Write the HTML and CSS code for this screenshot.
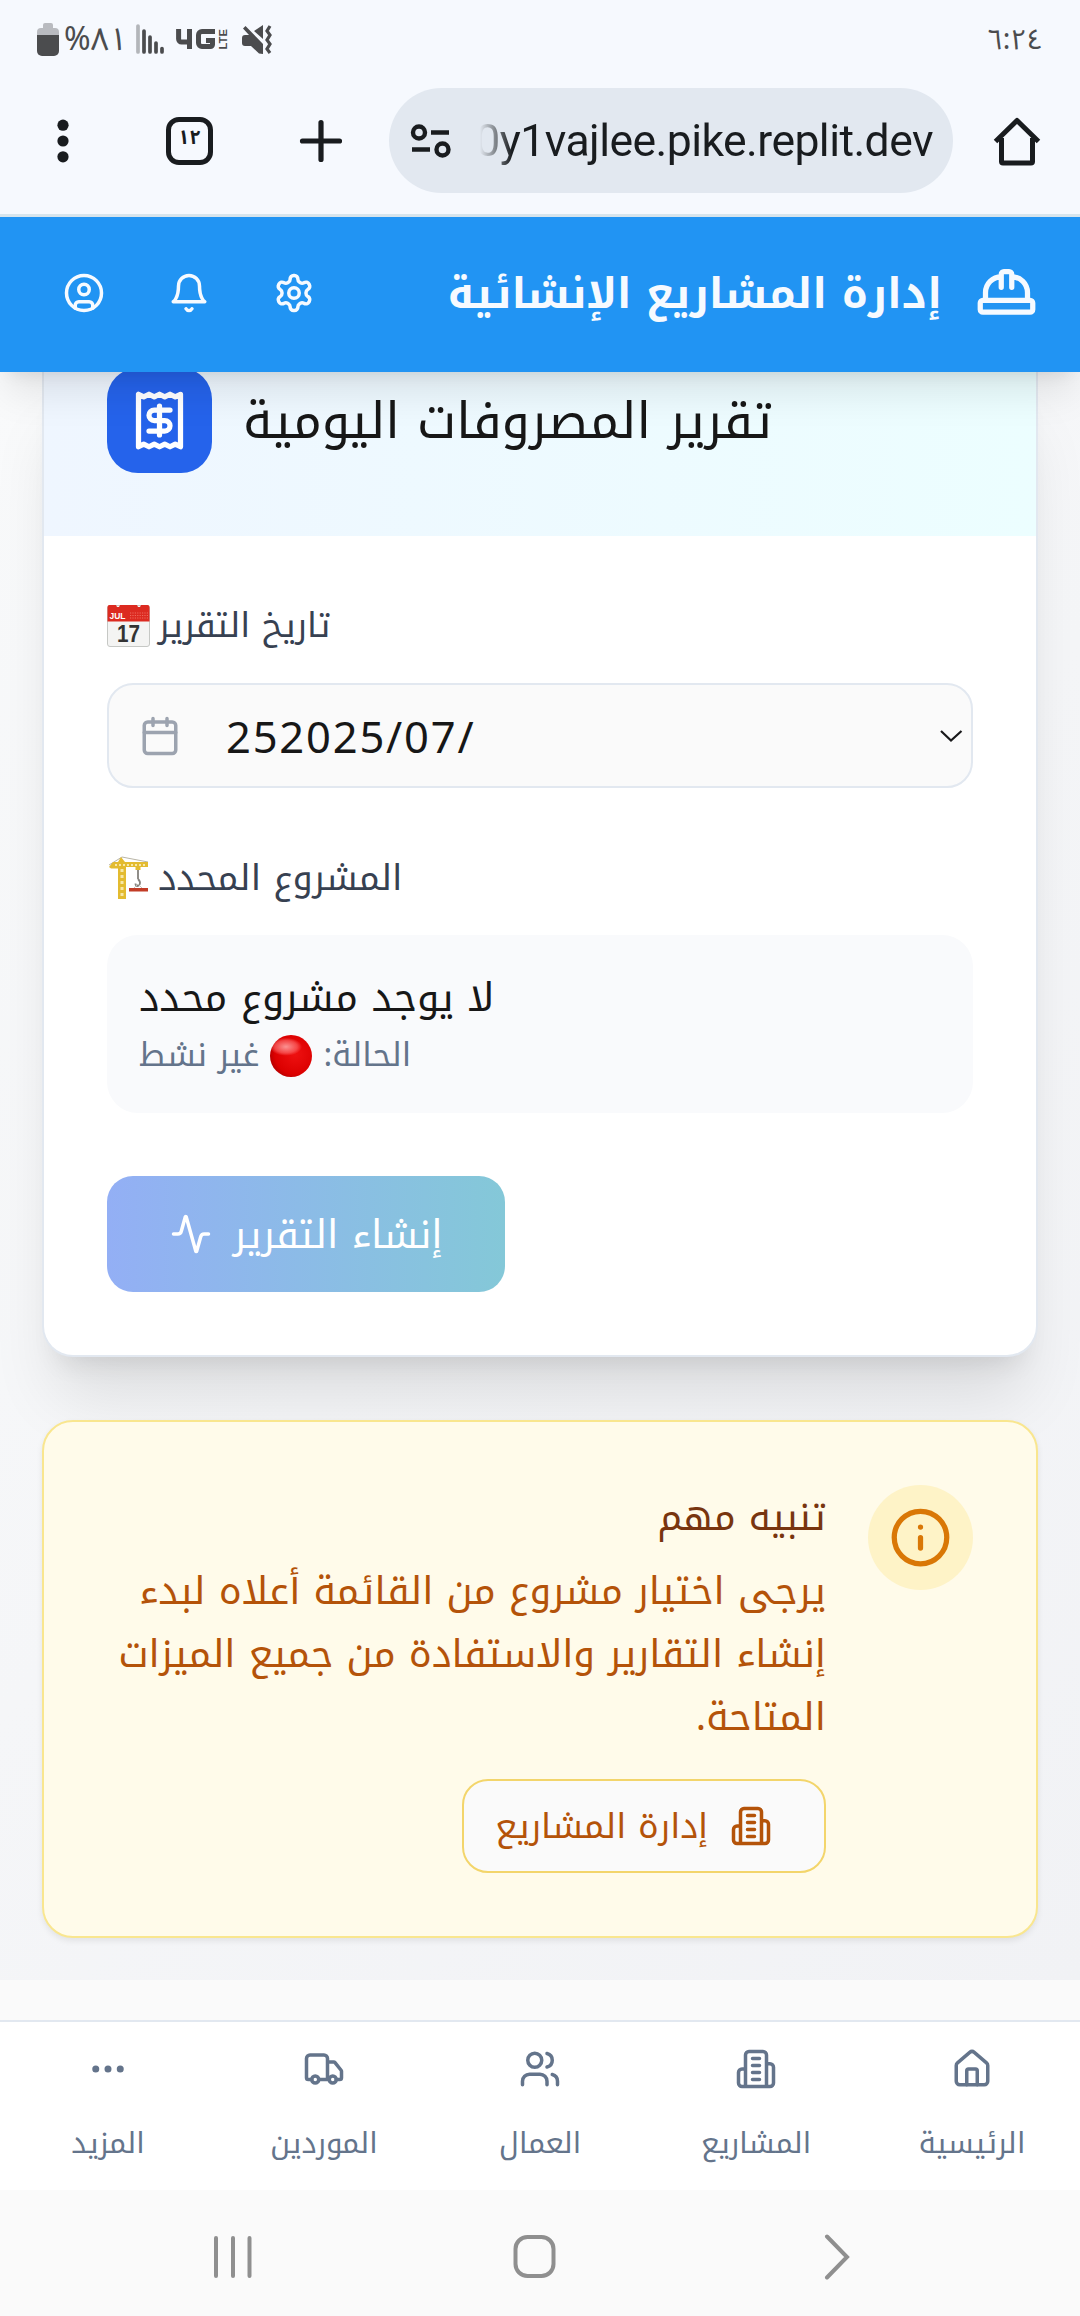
FILE: index.html
```html
<!DOCTYPE html>
<html lang="ar" dir="rtl">
<head>
<meta charset="utf-8">
<title>إدارة المشاريع الإنشائية</title>
<link rel="stylesheet" href="styles.css">
</head>
<body>
<div class="screen">
  <div class="status-bar" dir="ltr">
    <svg class="battery" width="22" height="34" viewBox="0 0 22 34"><path d="M6 5V2a2 2 0 0 1 2-2h6a2 2 0 0 1 2 2v3h2a4 4 0 0 1 4 4v4H0V9a4 4 0 0 1 4-4z" fill="#b9bbc0"/><path d="M0 12h22v16a5 5 0 0 1-5 5H5a5 5 0 0 1-5-5z" fill="#4b4c4e"/></svg>
    <span class="percent">%٨١</span>
    <svg class="signal" width="28" height="31" viewBox="0 0 28 31" stroke="#4b4c4e" stroke-width="3.7" stroke-linecap="round"><path d="M2 2v26" stroke="#b3b6ba"/><path d="M8 7v21M14 13v15M20 19v9M26 24.500v3.500"/></svg>
    <svg class="network" width="52" height="24" viewBox="0 0 52 24" aria-label="4G LTE"><path d="M2.600 0v10a3 3 0 0 0 3 3H16M13.500 0v20" fill="none" stroke="#4b4c4e" stroke-width="5"/><path d="M39 2.500H26A3.500 3.500 0 0 0 22.500 6v8a3.500 3.500 0 0 0 3.500 3.500h8.500a2 2 0 0 0 2-2v-4H30" fill="none" stroke="#4b4c4e" stroke-width="5"/><text class="lte" transform="translate(50.500 20.500) rotate(-90)" textLength="20.500" lengthAdjust="spacingAndGlyphs">LTE</text></svg>
    <svg class="mute" width="31" height="32" viewBox="0 0 31 32"><path d="M0 13a3 3 0 0 1 3-3h4L1 3.500 3.500 1 21 19v10L17 28.500 9 21H3a3 3 0 0 1-3-3zM12 6l9-6v14z" fill="#4b4c4e"/><path d="M28 1l-3 5 3 4-3 5 3 4-3 5 3 4" fill="none" stroke="#4b4c4e" stroke-width="3.200"/></svg>
    <span class="clock">٦:٢٤</span>
  </div>
  <div class="browser-bar" dir="ltr">
    <svg class="menu-dots" width="12" height="44" viewBox="0 0 12 44" fill="#191c1f"><circle cx="6" cy="6.200" r="5.600"/><circle cx="6" cy="22" r="5.600"/><circle cx="6" cy="37.800" r="5.600"/></svg>
    <div class="tabs">١٢</div>
    <svg class="plus" width="44" height="44" viewBox="0 0 44 44"><path d="M22 3.500v37M3.500 22h37" stroke="#191c1f" stroke-width="5.200" stroke-linecap="round"/></svg>
    <div class="address">
      <svg class="tune" width="42" height="36" viewBox="0 0 42 36" fill="none" stroke="#191c1f" stroke-width="4.400"><circle cx="9" cy="9.500" r="6"/><path d="M21 9.500h18M2 26.500h18"/><circle cx="32.500" cy="26.500" r="6"/></svg>
      <div class="url"><span>0y1vajlee.pike.replit.dev</span></div>
    </div>
    <svg class="home" width="50" height="50" viewBox="0 0 50 50"><path d="M3.500 25.500 25 4.500l21.500 21M9.500 22v23.500a1.500 1.500 0 0 0 1.500 1.500h28a1.500 1.500 0 0 0 1.500-1.500V22" fill="none" stroke="#191c1f" stroke-width="5" stroke-linejoin="round"/></svg>
  </div>

  <header class="app-header">
    <svg class="icon helmet" viewBox="0 0 24 24"><path d="M10 10V5a1 1 0 0 1 1-1h2a1 1 0 0 1 1 1v5M14 6a6 6 0 0 1 6 6v3M4 15v-3a6 6 0 0 1 6-6"/><rect x="2" y="15" width="20" height="4.500" rx="1"/></svg>
    <h1>إدارة المشاريع الإنشائية</h1>
    <nav class="tools" dir="ltr">
      <svg class="icon" viewBox="0 0 24 24"><circle cx="12" cy="12" r="10"/><circle cx="12" cy="10" r="3"/><path d="M7 20.662V19a2 2 0 0 1 2-2h6a2 2 0 0 1 2 2v1.662"/></svg>
      <svg class="icon" viewBox="0 0 24 24"><path d="M6 8a6 6 0 0 1 12 0c0 7 3 9 3 9H3s3-2 3-9M10.300 21a1.940 1.940 0 0 0 3.400 0"/></svg>
      <svg class="icon" viewBox="0 0 24 24"><path d="M12.220 2h-.44a2 2 0 0 0-2 2v.18a2 2 0 0 1-1 1.730l-.43.25a2 2 0 0 1-2 0l-.15-.08a2 2 0 0 0-2.730.73l-.22.38a2 2 0 0 0 .73 2.730l.15.1a2 2 0 0 1 1 1.720v.51a2 2 0 0 1-1 1.740l-.15.09a2 2 0 0 0-.73 2.730l.22.38a2 2 0 0 0 2.730.73l.15-.08a2 2 0 0 1 2 0l.43.25a2 2 0 0 1 1 1.730V20a2 2 0 0 0 2 2h.44a2 2 0 0 0 2-2v-.18a2 2 0 0 1 1-1.730l.43-.25a2 2 0 0 1 2 0l.15.08a2 2 0 0 0 2.730-.73l.22-.39a2 2 0 0 0-.73-2.730l-.15-.08a2 2 0 0 1-1-1.740v-.5a2 2 0 0 1 1-1.740l.15-.09a2 2 0 0 0 .73-2.730l-.22-.38a2 2 0 0 0-2.730-.73l-.15.08a2 2 0 0 1-2 0l-.43-.25a2 2 0 0 1-1-1.730V4a2 2 0 0 0-2-2z"/><circle cx="12" cy="12" r="3"/></svg>
    </nav>
  </header>

  <main class="content">
    <section class="card" dir="ltr">
      <div class="card-head">
        <div class="badge"><svg class="icon" viewBox="0 0 24 24"><path d="M4 2v20l2-1 2 1 2-1 2 1 2-1 2 1 2-1 2 1V2l-2 1-2-1-2 1-2-1-2 1-2-1-2 1ZM16 8h-6a2 2 0 1 0 0 4h4a2 2 0 1 1 0 4H8M12 17.500v-11"/></svg></div>
        <h2>تقرير المصروفات اليومية</h2>
      </div>
      <div class="card-body">
        <div class="label">
          <svg width="44" height="44" viewBox="0 0 44 44"><rect x=".5" y="1.500" width="42" height="41" rx="2.500" fill="#f4f4f3" stroke="#c6c8c5"/><path d="M.5 3a2 2 0 0 1 2-2H9l1 2h2l1-2h17l1 2h2l1-2h6.500a2 2 0 0 1 2 2v14.500H.5z" fill="#dc2a20"/><path d="M23 9h18M23 11.500h18M23 14h18" stroke="#ee6a5e" stroke-width="1" stroke-dasharray="1.200 1.200"/><text class="cal-month" x="2.500" y="14.500" textLength="16" lengthAdjust="spacingAndGlyphs">JUL</text><text class="cal-day" x="21.500" y="38" text-anchor="middle" textLength="23" lengthAdjust="spacingAndGlyphs">17</text></svg>
          <span dir="rtl">تاريخ التقرير</span>
        </div>
        <div class="date-input">
          <svg class="icon" viewBox="0 0 24 24"><rect x="3" y="4" width="18" height="18" rx="2"/><path d="M16 2v4M8 2v4M3 10h18"/></svg>
          <span class="date">252025/07/</span>
          <svg class="chevron" width="24" height="14" viewBox="0 0 24 14"><path d="M2 2l10 9.500L22.500 2" fill="none" stroke="#18181a" stroke-width="2.200"/></svg>
        </div>
        <div class="label label-project">
          <svg width="44" height="44" viewBox="0 0 44 44"><path d="M15 1 2 9M15 1l26 5" stroke="#b9b5a6" fill="none"/><path d="M14 1l-3 5H6l-4 5 2 1.500h7V43h8V11h22V6H18z" fill="#e3bb30"/><path d="M8 9h32" stroke="#f7e7a8" stroke-width="2" stroke-dasharray="2 2"/><path d="M15 13v29" stroke="#f7e7a8" stroke-width="3" stroke-dasharray="3 3"/><path d="M28.500 11h5v3h-5z" fill="#e3bb30"/><path d="M31 14v9m0 0c4 4 1 7-.5 7s-2-1-2-2.500" stroke="#84827d" stroke-width="1.800" fill="none"/><path d="M31 28l-5 5h10z" fill="none" stroke="#c4c1bb"/><rect x="22" y="32" width="19" height="3.500" fill="#c23c26"/></svg>
          <span dir="rtl">المشروع المحدد</span>
        </div>
        <div class="project">
          <div class="project-name" dir="rtl">لا يوجد مشروع محدد</div>
          <div class="project-state" dir="rtl"><span>الحالة:</span><i class="dot"></i><span>غير نشط</span></div>
        </div>
        <button class="generate"><svg class="icon" viewBox="0 0 24 24"><path d="M22 12h-2.480a2 2 0 0 0-1.930 1.460l-2.350 8.360a.25.25 0 0 1-.48 0L9.240 2.180a.25.25 0 0 0-.48 0l-2.350 8.360A2 2 0 0 1 4.490 12H2"/></svg><span>إنشاء التقرير</span></button>
      </div>
    </section>

    <section class="notice">
      <div class="notice-icon"><svg class="icon" viewBox="0 0 24 24"><circle cx="12" cy="12" r="10"/><path d="M12 16v-4M12 8h.01"/></svg></div>
      <div class="notice-text">
        <h3>تنبيه مهم</h3>
        <p>يرجى اختيار مشروع من القائمة أعلاه لبدء<br>إنشاء التقارير والاستفادة من جميع الميزات<br>المتاحة.</p>
        <button class="manage"><svg class="icon" viewBox="0 0 24 24"><path d="M6 22V4a2 2 0 0 1 2-2h8a2 2 0 0 1 2 2v18ZM6 12H4a2 2 0 0 0-2 2v6a2 2 0 0 0 2 2h2M18 9h2a2 2 0 0 1 2 2v9a2 2 0 0 1-2 2h-2M10 6h4M10 10h4M10 14h4M10 18h4"/></svg><span>إدارة المشاريع</span></button>
      </div>
    </section>
  </main>

  <nav class="bottom-nav">
    <a><svg class="icon" viewBox="0 0 24 24"><path d="M15 21v-8a1 1 0 0 0-1-1h-4a1 1 0 0 0-1 1v8"/><path d="M3 10a2 2 0 0 1 .709-1.528l7-5.999a2 2 0 0 1 2.582 0l7 5.999A2 2 0 0 1 21 10v9a2 2 0 0 1-2 2H5a2 2 0 0 1-2-2z"/></svg><span>الرئيسية</span></a>
    <a><svg class="icon" viewBox="0 0 24 24"><path d="M6 22V4a2 2 0 0 1 2-2h8a2 2 0 0 1 2 2v18ZM6 12H4a2 2 0 0 0-2 2v6a2 2 0 0 0 2 2h2M18 9h2a2 2 0 0 1 2 2v9a2 2 0 0 1-2 2h-2M10 6h4M10 10h4M10 14h4M10 18h4"/></svg><span>المشاريع</span></a>
    <a><svg class="icon" viewBox="0 0 24 24"><path d="M16 21v-2a4 4 0 0 0-4-4H6a4 4 0 0 0-4 4v2"/><circle cx="9" cy="7" r="4"/><path d="M22 21v-2a4 4 0 0 0-3-3.870M16 3.130a4 4 0 0 1 0 7.750"/></svg><span>العمال</span></a>
    <a><svg class="icon" viewBox="0 0 24 24"><path d="M14 18V6a2 2 0 0 0-2-2H4a2 2 0 0 0-2 2v11a1 1 0 0 0 1 1h2M15 18H9M19 18h2a1 1 0 0 0 1-1v-3.650a1 1 0 0 0-.22-.624l-3.480-4.350A1 1 0 0 0 17.520 8H14"/><circle cx="17" cy="18" r="2"/><circle cx="7" cy="18" r="2"/></svg><span>الموردين</span></a>
    <a><svg class="icon" viewBox="0 0 24 24"><circle cx="12" cy="12" r="1"/><circle cx="19" cy="12" r="1"/><circle cx="5" cy="12" r="1"/></svg><span>المزيد</span></a>
  </nav>
  <div class="system-nav" dir="ltr">
    <svg class="recents" width="40" height="44" viewBox="0 0 40 44"><path d="M3 3v38M20 3v38M36.500 3v38"/></svg>
    <svg class="home-key" width="44" height="44" viewBox="0 0 44 44"><rect x="2.500" y="2" width="38" height="39" rx="12"/></svg>
    <svg class="back" width="26" height="46" viewBox="0 0 26 46"><path d="M3 2.500 23 23 3 43.500"/></svg>
  </div>
</div>
</body>
</html>
```
FILE: styles.css
```css
* { box-sizing: border-box; }
body { margin: 0; background: #fafafa; font-family: "Noto Kufi Arabic", "DejaVu Sans", "Noto Sans", sans-serif; }
h1, h2, h3, p { margin: 0; }
svg { display: block; flex: none; }
button { font: inherit; border: 0; padding: 0; }
span { white-space: nowrap; }
.screen { width: 1080px; height: 2316px; overflow: hidden; display: flex; flex-direction: column; }
.icon { width: 42px; height: 42px; fill: none; stroke: currentColor; stroke-width: 2; stroke-linecap: round; stroke-linejoin: round; }

.status-bar { height: 80px; flex: none; background: #f6f9fe; display: flex; align-items: flex-start; padding: 23px 37px 0; color: #4b4c4e; font-family: "Noto Sans Arabic", "Noto Sans", sans-serif; line-height: 34px; }
.percent { margin-left: 5px; width: 57px; font-size: 32px; }
.signal { margin: 1px 0 0 15px; }
.network { margin: 6px 0 0 12px; }
.lte { font: 700 11px "Liberation Sans", sans-serif; fill: #4b4c4e; }
.mute { margin: 2px 0 0 14px; }
.clock { margin-left: auto; font-size: 28.5px; }

.browser-bar { height: 137px; flex: none; background: #f6f9fe; border-bottom: 3px solid #d7e5ed; display: flex; align-items: center; padding: 0 38px 13px 57px; }
.tabs { width: 47px; height: 48px; margin-left: 97px; border: 5px solid #191c1f; border-radius: 13px; font: 700 20px/33px "Noto Sans Arabic", "DejaVu Sans", sans-serif; text-align: center; color: #191c1f; }
.plus { margin-left: 86px; }
.address { width: 565px; height: 105px; margin-left: 46px; border-radius: 53px; background: #e2e8f0; display: flex; align-items: center; padding-left: 21px; }
.url { width: 461px; margin-left: 20px; overflow: hidden; display: flex; justify-content: flex-end; font: 44.5px/60px Roboto, sans-serif; letter-spacing: -.55px; color: #191c1f; -webkit-mask-image: linear-gradient(90deg, transparent 8px, #000 40px); mask-image: linear-gradient(90deg, transparent 8px, #000 40px); }
.home { margin-left: 39px; }

.app-header { position: relative; z-index: 2; height: 155px; flex: none; background: #2194f3; color: #f6faff; display: flex; align-items: center; padding: 0 42px 4px 63px; box-shadow: 0 26px 39px -8px rgba(0,0,0,.1), 0 10px 16px -10px rgba(0,0,0,.1); }
.helmet { width: 63px; height: 63px; }
.app-header h1 { margin: 3px 33px 0 0; font-size: 42.500px; line-height: 70px; font-weight: 700; white-space: nowrap; }
.tools { margin-right: auto; display: flex; gap: 63px; }

.content { height: 1608px; flex: none; overflow: hidden; background: linear-gradient(135deg, #f9fafb, #f1f2f5); padding: 0 42px; }
.card { border: 2px solid #e2e8f0; border-top: 0; border-radius: 0 0 31px 31px; background: #fff; box-shadow: 0 52px 65px -13px rgba(0,0,0,.1), 0 21px 26px -16px rgba(0,0,0,.1); }
.card-head { height: 163.500px; display: flex; align-items: flex-start; padding: 0 63px; background: linear-gradient(90deg, #eff6ff, #ecfeff); }
.badge { width: 105px; height: 105px; margin-top: -4.500px; border-radius: 31px; background: #2563eb; color: #fff; display: grid; place-items: center; }
.badge .icon { width: 63px; height: 63px; }
.card-head h2 { margin: -3px 0 0 31px; font-size: 50.400px; line-height: 105px; font-weight: 400; color: #171717; white-space: nowrap; }
.card-body { padding: 69px 63px 63px; }
.label { display: flex; align-items: center; height: 42px; margin-bottom: 36.500px; font-size: 34.300px; line-height: 42px; color: #374151; }
.label span { margin-left: 7px; }
.label-project { margin-bottom: 36px; font-size: 36px; }
.cal-month { font: 700 9.500px "Liberation Sans", sans-serif; fill: #fff; }
.cal-day { font: 700 23px "Liberation Sans", sans-serif; fill: #333; }
.date-input { height: 105px; border: 2px solid #e2e8f0; border-radius: 26px; background: #fafafa; display: flex; align-items: center; padding: 0 8px 0 30px; color: #171717; margin-bottom: 69px; }
.date-input .icon { color: #9ca3af; }
.date { margin-left: 45px; font: 43.500px/60px "Noto Sans", sans-serif; letter-spacing: 1.800px; }
.chevron { margin-left: auto; }
.project { height: 177.500px; border-radius: 31px; background: #f9fafc; padding: 31px 32px; display: flex; flex-direction: column; align-items: flex-start; }
.project-name { font-size: 39.700px; line-height: 63px; color: #171717; white-space: nowrap; }
.project-state { display: flex; align-items: center; font-size: 32.800px; line-height: 53px; color: #64748b; }
.dot { width: 42px; height: 42px; margin: 0 11px; border-radius: 50%; background: radial-gradient(ellipse 16px 9px at 38% 28%, rgba(255,170,170,.85), rgba(255,110,110,.6) 70%, transparent), radial-gradient(circle at 60% 45%, #ee1111, #dc0000 60%, #b80000 75%, #ef5050); }
.generate { width: 398px; height: 115.500px; margin-top: 63.500px; border-radius: 26px; background: linear-gradient(90deg, #93aff5, #84c8d8); color: #fff; display: flex; align-items: center; padding-left: 63px; font-size: 39.200px; line-height: 60px; }
.generate span { margin: 2px 0 0 21px; }

.notice { height: 517.500px; margin-top: 63.500px; border: 2px solid #f9e68f; border-radius: 31px; background: #fffbea; box-shadow: 0 3px 6px rgba(0,0,0,.08); padding: 62.500px 63px; display: flex; gap: 42px; }
.notice-icon { width: 105px; height: 105px; flex: none; border-radius: 50%; background: #fef3c7; color: #d97706; display: grid; place-items: center; }
.notice-icon .icon { width: 63px; height: 63px; }
.notice-text { white-space: nowrap; }
.notice h3 { padding-top: 1px; font-size: 37.800px; line-height: 63px; font-weight: 400; color: #78350f; }
.notice p { margin-top: 11px; font-size: 38.700px; line-height: 63px; color: #b45309; }
.manage { width: 364px; height: 94px; margin-top: 30px; border: 2px solid #f3d56b; border-radius: 26px; background: #fafafa; color: #b45309; display: flex; align-items: center; padding-right: 52px; font-size: 34.800px; line-height: 50px; }
.manage span { margin-right: 22px; }

.bottom-nav { height: 170px; flex: none; margin-top: 40px; border-top: 2px solid #e2e8f0; background: #fff; display: grid; grid-template-columns: repeat(5, 1fr); color: #64748b; }
.bottom-nav a { display: flex; flex-direction: column; align-items: center; padding-top: 26px; font-size: 29.300px; line-height: 42px; }
.bottom-nav span { margin-top: 32px; }
.system-nav { flex: 1; display: flex; align-items: center; padding: 7px 0 0 213px; }
.system-nav svg { fill: none; stroke: #8f8f8f; stroke-width: 4; stroke-linecap: round; }
.home-key { margin-left: 260px; }
.back { margin-left: 267px; }
```
